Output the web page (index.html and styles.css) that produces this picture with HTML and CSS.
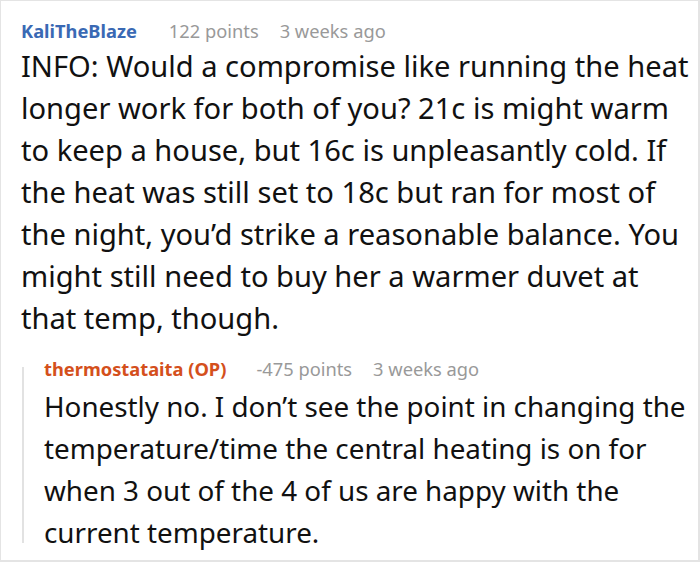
FILE: index.html
```html
<!DOCTYPE html>
<html>
<head>
<meta charset="utf-8">
<link rel="stylesheet" href="styles.css">
</head>
<body>
<div class="frame">
  <div class="comment">
    <div class="meta">
      <span class="author">KaliTheBlaze</span>
      <span class="info">122 points</span>
      <span class="info">3 weeks ago</span>
    </div>
    <p class="body">INFO: Would a compromise like running the heat longer work for both of you? 21c is might warm to keep a house, but 16c is unpleasantly cold. If the heat was still set to 18c but ran for most of the night, you’d strike a reasonable balance. You might still need to buy her a warmer duvet at that temp, though.</p>
    <div class="reply">
      <div class="meta">
        <span class="author op">thermostataita (OP)</span>
        <span class="info">-475 points</span>
        <span class="info">3 weeks ago</span>
      </div>
      <p class="body">Honestly no. I don’t see the point in changing the temperature/time the central heating is on for when 3 out of the 4 of us are happy with the current temperature.</p>
    </div>
  </div>
</div>
</body>
</html>
```
FILE: styles.css
```css
html, body {
  margin: 0;
  padding: 0;
  background: #fff;
}
body {
  font-family: "Noto Sans", "Open Sans", sans-serif;
  color: #111;
}
.frame {
  width: 700px;
  height: 562px;
  box-sizing: border-box;
  border-style: solid;
  border-color: #e4e4e4;
  border-width: 1px 2px 2px 1px;
  overflow: hidden;
}
.comment {
  padding: 17.7px 7px 0 20px;
}
.meta {
  display: flex;
  align-items: baseline;
  gap: 21px;
  font-size: 18.3px;
  line-height: 24px;
}
.author {
  font-weight: 700;
  color: #3a69b4;
  margin-right: 11px;
}
.author.op {
  color: #d4501c;
  margin-right: 9px;
}
.info {
  color: #999;
}
.body {
  margin: 2.6px 0 0;
  font-size: 29.1px;
  line-height: 42px;
}
.reply {
  position: relative;
  margin-top: 18px;
  padding-left: 23px;
}
.reply::before {
  content: "";
  position: absolute;
  left: 1px;
  top: 10px;
  bottom: 10px;
  width: 2px;
  background: #e2e2e2;
}
.reply .body {
  margin-top: 4px;
  font-size: 27.8px;
}
```
